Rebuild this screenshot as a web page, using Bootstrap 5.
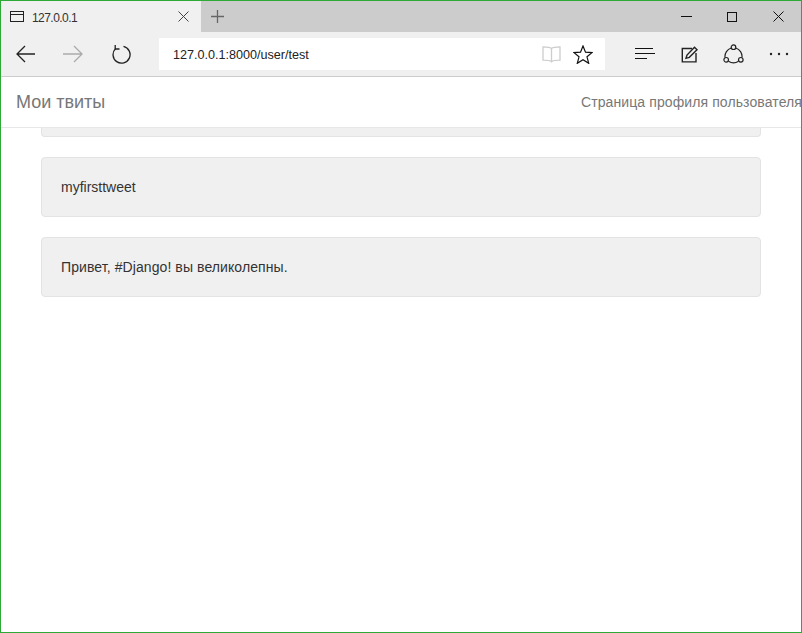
<!DOCTYPE html>
<html lang="ru">
<head>
<meta charset="utf-8">
<title>Мои твиты</title>
<link href="https://cdn.jsdelivr.net/npm/bootstrap@5.3.0/dist/css/bootstrap.min.css" rel="stylesheet">
<style>
html,body{height:100%;margin:0;overflow:hidden}
body{font-family:"Liberation Sans",Arial,sans-serif;font-size:14px;color:#333;background:#fff}
.frame{height:633px;border:1px solid #2ea836;display:flex;flex-direction:column;overflow:hidden}
.chrome-top{height:31px;background:#ccc;flex:none}
.tab-box{width:200px;background:#f0f0f0;padding-left:9px;padding-right:12px}
.tab-label{font-size:12px;letter-spacing:-.55px;color:#333;margin-left:8px;padding-top:2px}
.plus-box{width:33px}
.win-btn{width:46px}
.tool-row{height:44px;background:#f0f0f0;flex:none}
.nav-left{width:158px;padding-left:15px;gap:28px}
.addr{width:446px;height:32px;background:#fff;padding-left:14px;padding-right:12px;font-size:12.6px;color:#222}
.addr-txt{padding-top:2px}
.addr-icons{gap:12px}
.tool-right{padding-left:30px;gap:25px}
.sep-line{height:1px;background:#ccc;flex:none}
.top-bar{height:51px;background:#fff;border-bottom:1px solid #e7e7e7;flex:none;padding-left:15px}
.brand-txt{font-size:18px;color:#777;white-space:nowrap}
.profile-link{font-size:14px;color:#777;white-space:nowrap;margin-right:-1px;letter-spacing:.1px}
.feed{padding:0 40px;flex:1}
.tweet-box{background:#f0f0f0;border:1px solid #e3e3e3;border-radius:4px;height:60px;padding:19px;line-height:20px;margin-bottom:20px}
.tweet-cut{height:9px;padding:0;border-top:0;border-top-left-radius:0;border-top-right-radius:0}
.tweet-ru{letter-spacing:.09px}
svg{display:block;flex:none}
</style>
</head>
<body>
<div class="frame">
  <div class="chrome-top d-flex">
    <div class="tab-box d-flex align-items-center">
      <svg width="14" height="12" viewBox="0 0 14 12" fill="none" stroke="#222"><rect x=".5" y=".5" width="13" height="10"/><path d="M0 3.500h14"/></svg>
      <span class="tab-label flex-grow-1">127.0.0.1</span>
      <svg width="11" height="11" viewBox="0 0 11 11" fill="none" stroke="#444"><path d="M.5.5l10 10M10.500.5l-10 10"/></svg>
    </div>
    <div class="plus-box d-flex align-items-center justify-content-center">
      <svg width="13" height="13" viewBox="0 0 13 13" fill="none" stroke="#666" stroke-width="1.3"><path d="M6.500 0v13M0 6.500h13"/></svg>
    </div>
    <div class="ms-auto d-flex">
      <div class="win-btn d-flex align-items-center justify-content-center"><svg width="11" height="11" viewBox="0 0 11 11" stroke="#111"><path d="M0 5.500h11"/></svg></div>
      <div class="win-btn d-flex align-items-center justify-content-center"><svg width="10" height="10" viewBox="0 0 10 10" fill="none" stroke="#111"><rect x=".5" y=".5" width="9" height="9"/></svg></div>
      <div class="win-btn d-flex align-items-center justify-content-center"><svg width="11" height="11" viewBox="0 0 11 11" fill="none" stroke="#111"><path d="M.5.5l10 10M10.500.5l-10 10"/></svg></div>
    </div>
  </div>
  <div class="tool-row d-flex align-items-center">
    <div class="nav-left d-flex align-items-center">
      <svg width="19" height="18" viewBox="0 0 19 18" fill="none" stroke="#222" stroke-width="1.3"><path d="M19 9H1M9 1L1 9l8 8"/></svg>
      <svg width="20" height="18" viewBox="0 0 20 18" fill="none" stroke="#aaa" stroke-width="1.3"><path d="M0 9h19M11 1l8 8-8 8"/></svg>
      <svg width="20" height="19" viewBox="0 0 20 19" fill="none" stroke="#222" stroke-width="1.3"><path d="M12.500 1.400A8.500 8.500 0 1 1 4.600 3.600"/><path d="M4.200 0v4h4.300"/></svg>
    </div>
    <div class="addr d-flex align-items-center">
      <span class="addr-txt flex-grow-1">127.0.0.1:8000/user/test</span>
      <div class="addr-icons d-flex align-items-center">
        <svg width="19" height="17" viewBox="0 0 19 17" fill="none" stroke="#cdcdcd" stroke-width="1.300"><path d="M9.500 2.500C8 1 4 .8 1 .8v13.400c3 0 7 0 8.500 1.600 1.500-1.600 5.500-1.600 8.500-1.600V.8C15 .8 11 1 9.500 2.500zM9.500 2.500v13.300"/></svg>
        <svg width="20" height="19" viewBox="0 0 20 19" fill="none" stroke="#111" stroke-width="1.200"><path d="M10 1l2.500 6.200 6.500.4-5 4.200 1.700 6.500L10 14.700 4.300 18.300 6 11.800 1 7.600l6.500-.4z"/></svg>
      </div>
    </div>
    <div class="tool-right d-flex align-items-center">
      <svg width="21" height="12" viewBox="0 0 21 12" stroke="#111"><path d="M0 .5h18M0 5.500h20M0 10.500h12"/></svg>
      <svg width="17" height="17" viewBox="0 0 17 17" fill="none" stroke="#222" stroke-width="1.400"><path d="M11 2.500H1.300v13.400H15V7"/><path d="M5 12.300l1-3.300L13.500 1.300 16 3.800l-7.700 7.500z"/></svg>
      <svg width="21" height="20" viewBox="0 0 21 20" fill="none" stroke="#222" stroke-width="1.200"><circle cx="10.500" cy="3.200" r="2.300"/><circle cx="3.200" cy="15.800" r="2.300"/><circle cx="17.800" cy="15.800" r="2.300"/><path d="M8.300 4A9 9 0 0 0 2 13.500M12.700 4A9 9 0 0 1 19 13.500M5.500 17.200a9 9 0 0 0 10 0"/></svg>
      <svg width="20" height="4" viewBox="0 0 20 4" fill="#222"><circle cx="2" cy="2" r="1.200"/><circle cx="10" cy="2" r="1.200"/><circle cx="18" cy="2" r="1.200"/></svg>
    </div>
  </div>
  <div class="sep-line"></div>
  <div class="top-bar d-flex align-items-center justify-content-between">
    <span class="brand-txt">Мои твиты</span>
    <span class="profile-link">Страница профиля пользователя</span>
  </div>
  <div class="feed">
    <div class="tweet-box tweet-cut"></div>
    <div class="tweet-box">myfirsttweet</div>
    <div class="tweet-box tweet-ru">Привет, #Django! вы великолепны.</div>
  </div>
</div>
<script src="https://cdn.jsdelivr.net/npm/bootstrap@5.3.0/dist/js/bootstrap.bundle.min.js"></script>
</body>
</html>
